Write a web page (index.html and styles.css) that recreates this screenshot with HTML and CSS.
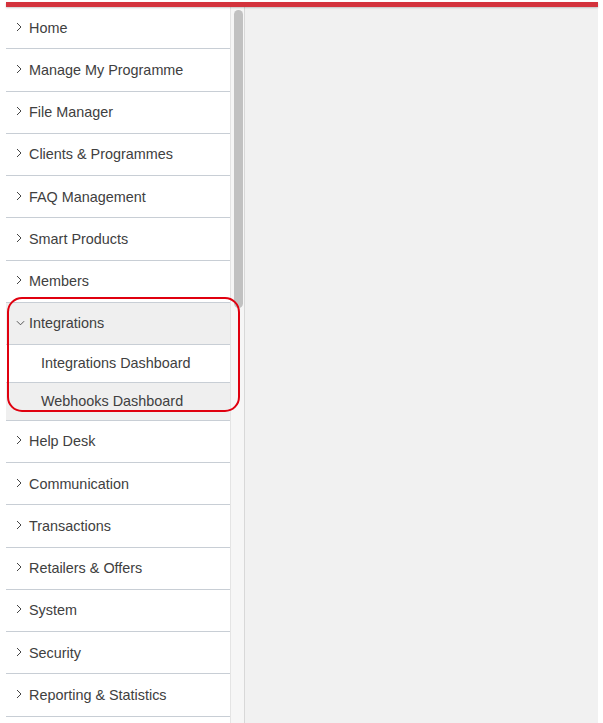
FILE: index.html
```html
<!DOCTYPE html>
<html>
<head>
<meta charset="utf-8">
<link rel="stylesheet" href="styles.css">
</head>
<body>
<div class="app">
  <div class="topbar"></div>
  <div class="layout">
    <nav class="sidebar">
      <ul class="menu">
        <li class="item"><svg class="chev" viewBox="0 0 6 10"><path d="M1 1 L5 5 L1 9"/></svg>Home</li>
        <li class="item"><svg class="chev" viewBox="0 0 6 10"><path d="M1 1 L5 5 L1 9"/></svg>Manage My Programme</li>
        <li class="item"><svg class="chev" viewBox="0 0 6 10"><path d="M1 1 L5 5 L1 9"/></svg>File Manager</li>
        <li class="item"><svg class="chev" viewBox="0 0 6 10"><path d="M1 1 L5 5 L1 9"/></svg>Clients &amp; Programmes</li>
        <li class="item"><svg class="chev" viewBox="0 0 6 10"><path d="M1 1 L5 5 L1 9"/></svg>FAQ Management</li>
        <li class="item"><svg class="chev" viewBox="0 0 6 10"><path d="M1 1 L5 5 L1 9"/></svg>Smart Products</li>
        <li class="item"><svg class="chev" viewBox="0 0 6 10"><path d="M1 1 L5 5 L1 9"/></svg>Members</li>
        <li class="item open"><svg class="chev down" viewBox="0 0 10 6"><path d="M1 1 L5 5 L9 1"/></svg>Integrations</li>
        <li class="sub">Integrations Dashboard</li>
        <li class="sub shaded">Webhooks Dashboard</li>
        <li class="item"><svg class="chev" viewBox="0 0 6 10"><path d="M1 1 L5 5 L1 9"/></svg>Help Desk</li>
        <li class="item"><svg class="chev" viewBox="0 0 6 10"><path d="M1 1 L5 5 L1 9"/></svg>Communication</li>
        <li class="item"><svg class="chev" viewBox="0 0 6 10"><path d="M1 1 L5 5 L1 9"/></svg>Transactions</li>
        <li class="item"><svg class="chev" viewBox="0 0 6 10"><path d="M1 1 L5 5 L1 9"/></svg>Retailers &amp; Offers</li>
        <li class="item"><svg class="chev" viewBox="0 0 6 10"><path d="M1 1 L5 5 L1 9"/></svg>System</li>
        <li class="item"><svg class="chev" viewBox="0 0 6 10"><path d="M1 1 L5 5 L1 9"/></svg>Security</li>
        <li class="item"><svg class="chev" viewBox="0 0 6 10"><path d="M1 1 L5 5 L1 9"/></svg>Reporting &amp; Statistics</li>
      </ul>
      <div class="highlight"></div>
    </nav>
    <div class="scrolltrack"><div class="thumb"></div></div>
    <main class="main"></main>
  </div>
</div>
</body>
</html>
```

FILE: styles.css
```css
html, body {
  margin: 0;
  padding: 0;
  background: #ffffff;
  height: 100%;
  overflow: hidden;
}
body {
  font-family: "Liberation Sans", Arial, sans-serif;
}
.app {
  margin: 2px 5px 0 6px;
  height: 721px;
  display: flex;
  flex-direction: column;
}
.topbar {
  height: 5px;
  background: #d3323c;
  box-shadow: 0 1px 2px rgba(0, 0, 0, 0.2);
  position: relative;
  z-index: 2;
}
.layout {
  flex: 1;
  display: flex;
  min-height: 0;
}
.sidebar {
  width: 224px;
  background: #ffffff;
  position: relative;
}
.menu {
  list-style: none;
  margin: 0;
  padding: 0;
}
.item, .sub {
  box-sizing: border-box;
  display: flex;
  align-items: center;
  border-bottom: 1px solid #c8ced5;
  font-size: 14.4px;
  color: #404040;
}
.item {
  height: 42.25px;
  padding-left: 10px;
}
.item.open {
  background: #efefef;
  height: 42px;
}
.sub {
  height: 38px;
  padding-left: 35px;
}
.sub.shaded {
  background: #efefef;
}
.chev {
  width: 6px;
  height: 10px;
  margin-right: 7px;
  fill: none;
  stroke: #444;
  stroke-width: 1;
  margin-top: -2px;
}
.chev.down {
  width: 9px;
  height: 6px;
  margin-right: 4px;
  margin-top: -1px;
}
.highlight {
  position: absolute;
  left: 1px;
  top: 290px;
  width: 233px;
  height: 115px;
  box-sizing: border-box;
  border: 2px solid #e0000f;
  border-radius: 15px;
}
.scrolltrack {
  width: 15px;
  box-sizing: border-box;
  background: #f6f6f6;
  border-left: 1px solid #e4e4e4;
  border-right: 1px solid #d8d8d8;
  padding: 3px 2px 0 3px;
}
.thumb {
  width: 9px;
  height: 298px;
  background: #c1c1c1;
  border-radius: 5px;
}
.main {
  flex: 1;
  background: #f1f1f1;
}
```
